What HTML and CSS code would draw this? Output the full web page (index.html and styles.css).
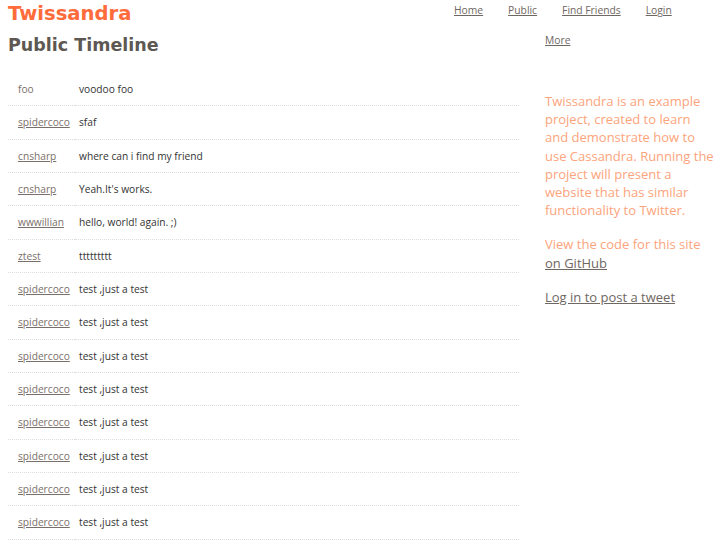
FILE: index.html
```html
<!DOCTYPE html>
<html>
<head>
<meta charset="utf-8">
<title>Twissandra</title>
<link rel="stylesheet" href="styles.css">
</head>
<body>
<header class="top">
  <a class="brand" href="#">Twissandra</a>
  <nav class="nav">
    <a href="#">Home</a>
    <a href="#">Public</a>
    <a href="#">Find Friends</a>
    <a href="#">Login</a>
  </nav>
</header>
<div class="page">
  <main class="main">
    <h1 class="title">Public Timeline</h1>
    <table class="timeline">
      <tr><td class="user plain">foo</td><td class="msg">voodoo foo</td></tr>
      <tr><td class="user"><a href="#">spidercoco</a></td><td class="msg">sfaf</td></tr>
      <tr><td class="user"><a href="#">cnsharp</a></td><td class="msg">where can i find my friend</td></tr>
      <tr><td class="user"><a href="#">cnsharp</a></td><td class="msg">Yeah.It's works.</td></tr>
      <tr><td class="user"><a href="#">wwwillian</a></td><td class="msg">hello, world! again. ;)</td></tr>
      <tr><td class="user"><a href="#">ztest</a></td><td class="msg">ttttttttt</td></tr>
      <tr><td class="user"><a href="#">spidercoco</a></td><td class="msg">test ,just a test</td></tr>
      <tr><td class="user"><a href="#">spidercoco</a></td><td class="msg">test ,just a test</td></tr>
      <tr><td class="user"><a href="#">spidercoco</a></td><td class="msg">test ,just a test</td></tr>
      <tr><td class="user"><a href="#">spidercoco</a></td><td class="msg">test ,just a test</td></tr>
      <tr><td class="user"><a href="#">spidercoco</a></td><td class="msg">test ,just a test</td></tr>
      <tr><td class="user"><a href="#">spidercoco</a></td><td class="msg">test ,just a test</td></tr>
      <tr><td class="user"><a href="#">spidercoco</a></td><td class="msg">test ,just a test</td></tr>
      <tr><td class="user"><a href="#">spidercoco</a></td><td class="msg">test ,just a test</td></tr>
    </table>
  </main>
  <aside class="side">
    <a class="more" href="#">More</a>
    <p class="blurb first">Twissandra is an example project, created to learn and demonstrate how to use Cassandra. Running the project will present a website that has similar functionality to Twitter.</p>
    <p class="blurb">View the code for this site <a href="#">on GitHub</a></p>
    <p class="blurb"><a href="#">Log in to post a tweet</a></p>
  </aside>
</div>
</body>
</html>
```

FILE: styles.css
```css
html, body {
  margin: 0;
  padding: 0;
  background: #fff;
}
body {
  font-family: "Open Sans", "DejaVu Sans", sans-serif;
  color: #333;
  font-size: 10.2px;
}
a {
  color: #7a6f6a;
}
.top {
  display: flex;
  justify-content: space-between;
  align-items: flex-start;
  padding: 0 0 0 8px;
  height: 30px;
}
.brand {
  font-family: "DejaVu Sans", sans-serif;
  font-weight: bold;
  font-size: 19.6px;
  color: #ff6b3a;
  text-decoration: none;
  line-height: 28px;
}
.nav {
  display: flex;
  gap: 25px;
  width: 273px;
  padding-top: 3px;
  font-size: 10.3px;
  line-height: 14px;
}
.nav a {
  color: #6f6762;
}
.page {
  display: flex;
  padding-left: 8px;
}
.main {
  width: 511px;
}
.title {
  margin: 0;
  font-family: "DejaVu Sans", sans-serif;
  font-weight: bold;
  font-size: 17.5px;
  color: #5e5853;
  line-height: 30px;
  height: 43px;
}
.timeline {
  width: 511px;
  border-collapse: collapse;
}
.timeline td {
  padding: 10px 4px 10px 4px;
  line-height: 12.33px;
  border-bottom: 1px dotted #ddd;
  vertical-align: middle;
}
.timeline td.user {
  width: 53px;
  padding-left: 10px;
  white-space: nowrap;
}
.timeline td.plain {
  color: #7a6f6a;
}
.side {
  margin-left: 26px;
  width: 170px;
}
.more {
  display: block;
  font-size: 10.3px;
  line-height: 14px;
  margin-top: 3px;
  color: #6f6762;
}
.blurb {
  font-size: 13px;
  line-height: 18.2px;
  color: #fca47c;
  margin: 16px 0 0;
}
.blurb.first {
  margin-top: 45px;
}
.blurb a {
  color: #6f6762;
}
```
